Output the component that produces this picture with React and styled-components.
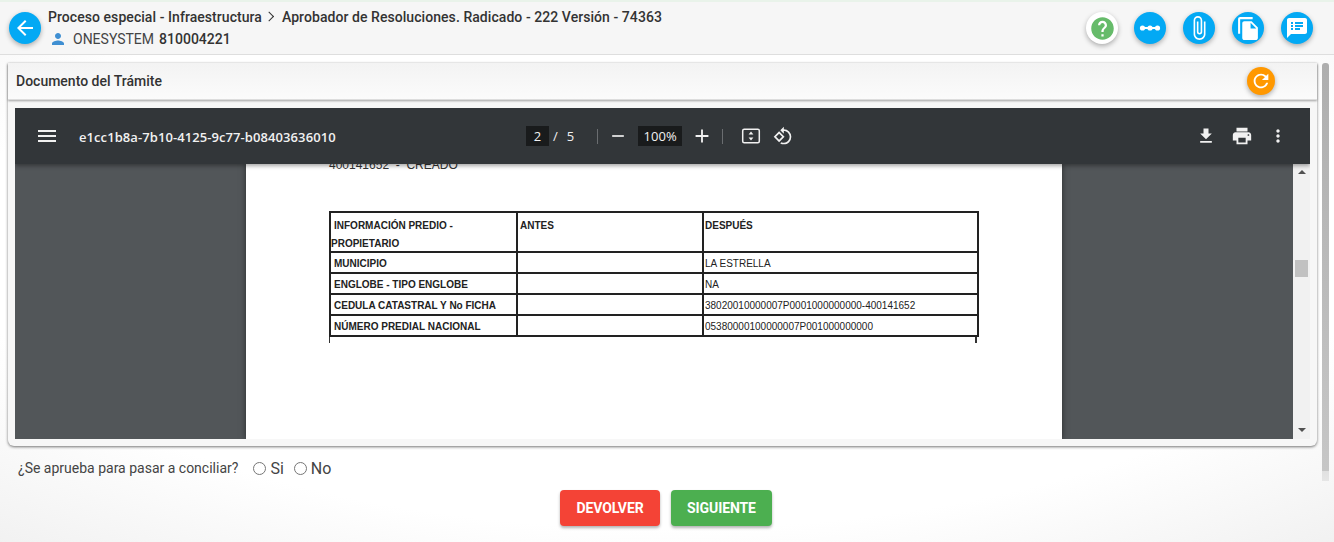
import React from 'react';
import styled, { createGlobalStyle } from 'styled-components';
import {
  MdArrowBack, MdPerson, MdHelp, MdAttachFile, MdFileCopy, MdSpeakerNotes, MdRefresh,
  MdMenu, MdRemove, MdAdd, MdRotate90DegreesCcw, MdFileDownload, MdPrint, MdMoreVert,
} from 'react-icons/md';

const GlobalStyle = createGlobalStyle`
  html, body {
    margin: 0;
    height: 100%;
    overflow: hidden;
  }
  body {
    font-family: Roboto, "Liberation Sans", sans-serif;
    color: #333;
    background: radial-gradient(ellipse 75% 75% at 50% 45%, #fff 70%, #f1f1f1 100%);
  }
`;

const Page = styled.div`
  width: 1334px;
  height: 542px;
  display: flex;
  flex-direction: column;
`;

const Header = styled.header`
  height: 55px;
  flex: none;
  box-sizing: border-box;
  padding: 0 21px 0 9px;
  display: flex;
  align-items: center;
  border-top: 2px solid #e9f3ea;
  border-bottom: 1px solid #dedede;
  background: #f6f6f6;
`;

const Round = styled.button`
  width: ${(p) => p.$size || 32}px;
  height: ${(p) => p.$size || 32}px;
  padding: 0;
  border: 0;
  border-radius: 50%;
  flex: none;
  display: flex;
  align-items: center;
  justify-content: center;
  color: #fff;
  background: ${(p) => p.$bg || '#03a9f4'};
  box-shadow: 0 2px 5px rgba(0, 0, 0, 0.3);
`;

const Titles = styled.div`
  margin-left: 7px;
  flex: 1;
  display: flex;
  flex-direction: column;
  gap: 5px;
`;

const Crumb = styled.div`
  font-size: 14px;
  line-height: 16px;
  font-weight: 500;
  letter-spacing: 0.06px;
  color: #333;
  display: flex;
  align-items: center;
`;

const Chevron = styled.span`
  margin: 0 8px 0 5px;
  width: 6px;
  height: 6px;
  border-top: 1.5px solid #333;
  border-right: 1.5px solid #333;
  transform: rotate(45deg) translate(-1px, 1px);
`;

const UserLine = styled.div`
  display: flex;
  align-items: center;
  font-size: 14px;
  line-height: 16px;
  color: #444;
  svg {
    color: #3f8fd2;
    margin: 0 6px 0 1px;
  }
  b {
    font-weight: 500;
    margin-left: 5px;
    color: #333;
  }
`;

const Actions = styled.div`
  display: flex;
  gap: 17px;
  > :first-child {
    margin-right: -1px;
  }
`;

const Body = styled.div`
  flex: 1;
  display: flex;
  min-height: 0;
`;

const Main = styled.main`
  width: 1309px;
  margin-left: 8px;
  padding-top: 8px;
`;

const Card = styled.section`
  height: 383px;
  box-sizing: border-box;
  border-radius: 0 0 6px 6px;
  background: #f7f7f7;
  box-shadow: 0 1px 3px rgba(0, 0, 0, 0.55);
`;

const CardHead = styled.div`
  height: 37px;
  box-sizing: border-box;
  padding: 0 42px 0 8px;
  display: flex;
  align-items: center;
  justify-content: space-between;
  background: linear-gradient(#f3f3f3, #fbfbfb);
  border-bottom: 1px solid #ddd;
  box-shadow: 0 1px 2px rgba(0, 0, 0, 0.35);
  font-size: 14px;
  font-weight: 500;
  color: #333;
`;

const Viewer = styled.div`
  margin: 8px 7px 0;
  height: 331px;
  display: flex;
  flex-direction: column;
  overflow: hidden;
`;

const PdfBar = styled.div`
  height: 56px;
  flex: none;
  position: relative;
  z-index: 1;
  display: grid;
  grid-template-columns: 1fr auto 1fr;
  align-items: center;
  background: #323639;
  color: #f1f1f1;
  box-shadow: 0 2px 4px rgba(0, 0, 0, 0.35);
  font-family: "Open Sans", "Liberation Sans", sans-serif;
  svg {
    display: block;
  }
`;

const BarLeft = styled.div`
  display: flex;
  align-items: center;
  padding-left: 20px;
  gap: 20px;
`;

const DocName = styled.span`
  padding-top: 1px;
  font-size: 13px;
  font-weight: 600;
  letter-spacing: 0.08px;
`;

const BarCenter = styled.div`
  display: flex;
  align-items: center;
  padding-right: 6px;
  font-size: 13px;
`;

const BarRight = styled.div`
  display: flex;
  align-items: center;
  justify-content: flex-end;
  gap: 15px;
  padding-right: 22px;
`;

const NumBox = styled.span`
  height: 20px;
  width: ${(p) => p.$w}px;
  margin-left: ${(p) => p.$ml || 0}px;
  display: flex;
  align-items: center;
  justify-content: center;
  background: #191b1c;
  color: #f1f1f1;
`;

const Slash = styled.span`
  margin: 0 9px 0 4px;
`;

const Sep = styled.span`
  width: 1px;
  height: 15px;
  background: #6a6d70;
  margin: ${(p) => p.$m};
`;

const BarIcon = styled.span`
  margin-left: ${(p) => p.$ml}px;
`;

const PdfArea = styled.div`
  flex: 1;
  min-height: 0;
  display: flex;
  background: #525659;
`;

const Canvas = styled.div`
  flex: 1;
  display: flex;
  justify-content: center;
  overflow: hidden;
`;

const Sheet = styled.div`
  width: 816px;
  height: 100%;
  padding: 0 84px 0 83px;
  box-sizing: border-box;
  background: #fff;
  box-shadow: 0 0 6px rgba(0, 0, 0, 0.5);
  font-family: "Liberation Sans", Arial, sans-serif;
  color: #222;
`;

const CutLine = styled.div`
  margin-top: -6px;
  margin-bottom: 39px;
  font-size: 12px;
  line-height: 14px;
  white-space: pre;
  color: #333;
`;

const Table = styled.table`
  width: 648px;
  table-layout: fixed;
  border-collapse: collapse;
  border: 2px solid #222;
  border-bottom: 0;
  font-size: 10px;
`;

const Td = styled.td`
  border: 2px solid #222;
  height: 21px;
  padding: 2px 3px 0 ${(p) => p.$pl ?? 3}px;
  box-sizing: border-box;
  vertical-align: middle;
  font-weight: ${(p) => (p.$bold ? 700 : 400)};
`;

const HeadCell = styled(Td)`
  height: 40px;
  padding-top: 3px;
  vertical-align: top;
  line-height: 19px;
  font-weight: 700;
  span {
    display: block;
  }
  span + span {
    margin: 0 0 -3px -3px;
    line-height: 18px;
  }
`;

const Stub = styled.div`
  width: 648px;
  height: 6px;
  box-sizing: border-box;
  border-left: 1px solid #333;
  border-right: 2px solid #333;
`;

const InnerScroll = styled.div`
  width: 17px;
  flex: none;
  background: #f1f1f1;
  display: flex;
  flex-direction: column;
  align-items: center;
  padding: 6px 0 7px;
  box-sizing: border-box;
`;

const Arrow = styled.span`
  width: 0;
  height: 0;
  border-left: 4px solid transparent;
  border-right: 4px solid transparent;
  ${(p) => (p.$down ? 'border-top: 4px solid #505050; margin-top: auto;' : 'border-bottom: 4px solid #505050;')}
`;

const Thumb = styled.span`
  width: 13px;
  height: 17px;
  margin-top: 86px;
  background: #c1c1c1;
`;

const Question = styled.form`
  margin: 13px 0 0 10px;
  height: 18px;
  display: flex;
  align-items: center;
  font-size: 14px;
  color: #444;
`;

const Opt = styled.label`
  display: flex;
  align-items: center;
  font-size: 16px;
  margin-left: ${(p) => p.$ml}px;
  color: #444;
  input {
    width: 13px;
    height: 13px;
    margin: 0 4px 0 0;
  }
`;

const Buttons = styled.div`
  margin-top: 13px;
  padding-left: 7px;
  display: flex;
  justify-content: center;
  gap: 11px;
`;

const Btn = styled.button`
  height: 36px;
  width: ${(p) => p.$w}px;
  border: 0;
  border-radius: 4px;
  font-family: Roboto, sans-serif;
  font-size: 14px;
  font-weight: 700;
  letter-spacing: -0.1px;
  color: #fff;
  background: ${(p) => p.$bg};
  box-shadow: 0 2px 3px rgba(0, 0, 0, 0.3);
`;

const PageScroll = styled.div`
  width: 7px;
  height: 418px;
  margin: 8px 0 0 5px;
  border-radius: 3px 3px 0 0;
  background: linear-gradient(#aeaeae 0, #c6c6c6 97.5%, #e0e0e0 97.5%, #e6e6e6 100%);
`;

const rows = [
  ['MUNICIPIO', 'LA ESTRELLA'],
  ['ENGLOBE - TIPO ENGLOBE', 'NA'],
  ['CEDULA CATASTRAL Y No FICHA', '38020010000007P0001000000000-400141652'],
  ['NÚMERO PREDIAL NACIONAL', '05380000100000007P001000000000'],
];

function TimelineIcon() {
  return (
    <svg width="26" height="26" viewBox="0 0 26 26" fill="#fff">
      <rect x="4" y="12" width="18" height="2" />
      <circle cx="5.5" cy="13" r="2.6" />
      <circle cx="13" cy="13" r="2.6" />
      <circle cx="20.5" cy="13" r="2.6" />
    </svg>
  );
}

function FitIcon() {
  return (
    <svg width="20" height="20" viewBox="0 0 20 20" fill="none">
      <rect x="1.7" y="3.2" width="16.6" height="13.6" rx="1.5" stroke="#f1f1f1" strokeWidth="1.5" />
      <path d="M10 5.5l2.4 3h-4.8zM10 14.5l-2.4-3h4.8z" fill="#f1f1f1" />
    </svg>
  );
}

export default function App() {
  return (
    <Page>
      <GlobalStyle />
      <Header>
        <Round aria-label="Volver"><MdArrowBack size={24} /></Round>
        <Titles>
          <Crumb>
            Proceso especial - Infraestructura
            <Chevron />
            Aprobador de Resoluciones. Radicado - 222 Versión - 74363
          </Crumb>
          <UserLine>
            <MdPerson size={18} />
            ONESYSTEM <b>810004221</b>
          </UserLine>
        </Titles>
        <Actions>
          <Round $bg="#fff" aria-label="Ayuda"><MdHelp size={27} color="#66bb6a" /></Round>
          <Round aria-label="Flujo"><TimelineIcon /></Round>
          <Round aria-label="Adjuntos"><MdAttachFile size={26} /></Round>
          <Round aria-label="Documentos"><MdFileCopy size={25} /></Round>
          <Round aria-label="Notas"><MdSpeakerNotes size={24} /></Round>
        </Actions>
      </Header>
      <Body>
        <Main>
          <Card>
            <CardHead>
              Documento del Trámite
              <Round $size={28} $bg="#ff9800" aria-label="Actualizar"><MdRefresh size={22} /></Round>
            </CardHead>
            <Viewer>
              <PdfBar>
                <BarLeft>
                  <MdMenu size={24} />
                  <DocName>e1cc1b8a-7b10-4125-9c77-b08403636010</DocName>
                </BarLeft>
                <BarCenter>
                  <NumBox $w={23}>2</NumBox>
                  <Slash>/</Slash>
                  <span>5</span>
                  <Sep $m="0 10px 0 23px" />
                  <MdRemove size={20} />
                  <NumBox $w={44} $ml={10}>100%</NumBox>
                  <BarIcon $ml={9}><MdAdd size={22} /></BarIcon>
                  <Sep $m="0 18px 0 9px" />
                  <FitIcon />
                  <BarIcon $ml={12}><MdRotate90DegreesCcw size={20} /></BarIcon>
                </BarCenter>
                <BarRight>
                  <MdFileDownload size={20} />
                  <MdPrint size={22} />
                  <MdMoreVert size={20} />
                </BarRight>
              </PdfBar>
              <PdfArea>
                <Canvas>
                  <Sheet>
                    <CutLine>400141652  -  CREADO</CutLine>
                    <Table>
                      <colgroup>
                        <col width="187" />
                        <col width="186" />
                        <col width="275" />
                      </colgroup>
                      <tbody>
                        <tr>
                          <HeadCell><span>INFORMACIÓN PREDIO -</span><span>PROPIETARIO</span></HeadCell>
                          <HeadCell $pl={2}>ANTES</HeadCell>
                          <HeadCell $pl={1}>DESPUÉS</HeadCell>
                        </tr>
                        {rows.map(([label, value]) => (
                          <tr key={label}>
                            <Td $bold>{label}</Td>
                            <Td />
                            <Td $pl={1}>{value}</Td>
                          </tr>
                        ))}
                      </tbody>
                    </Table>
                    <Stub />
                  </Sheet>
                </Canvas>
                <InnerScroll>
                  <Arrow />
                  <Thumb />
                  <Arrow $down />
                </InnerScroll>
              </PdfArea>
            </Viewer>
          </Card>
          <Question>
            ¿Se aprueba para pasar a conciliar?
            <Opt $ml={15}><input type="radio" name="ok" />Si</Opt>
            <Opt $ml={10}><input type="radio" name="ok" />No</Opt>
          </Question>
          <Buttons>
            <Btn $w={100} $bg="#f44336" type="button">DEVOLVER</Btn>
            <Btn $w={101} $bg="#4caf50" type="button">SIGUIENTE</Btn>
          </Buttons>
        </Main>
        <PageScroll />
      </Body>
    </Page>
  );
}
